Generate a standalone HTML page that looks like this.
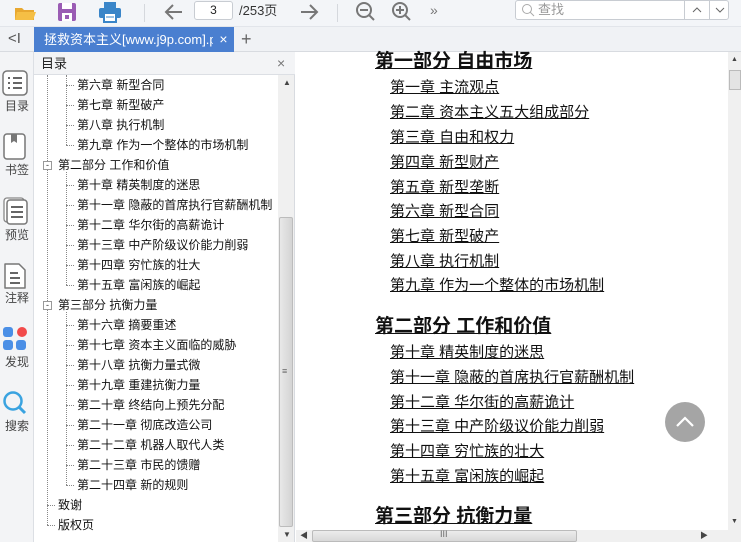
<!DOCTYPE html>
<html><head><meta charset="utf-8"><style>
*{margin:0;padding:0;box-sizing:border-box}
body{width:741px;height:542px;overflow:hidden;background:#fff;font-family:"Liberation Sans","Noto Sans CJK SC",sans-serif;position:relative;font-size:12px;color:#222}
.abs{position:absolute}
#tb{left:0;top:0;width:741px;height:27px;background:#f3f5f8;border-bottom:1px solid #e2e5ea}
#tabs{left:0;top:27px;width:741px;height:25px;background:#f0f2f5;border-bottom:1px solid #d8dbe0}
#tab{left:34px;top:27px;width:200px;height:25px;background:#4a7fd0;color:#fff;font-size:13px;line-height:25px;padding-left:10px;white-space:nowrap;overflow:hidden}
#side{left:0;top:52px;width:34px;height:490px;background:#f3f4f6;border-right:1px solid #dcdfe4}
.sl{position:absolute;left:0;width:34px;text-align:center;font-size:12px;color:#444}
#toc{left:34px;top:52px;width:261px;height:490px;background:#fff;border-right:1px solid #d8dbe0}
#toch{left:34px;top:52px;width:261px;height:23px;background:#f3f4f6;border-bottom:1px solid #dcdfe4;font-size:13px;line-height:23px;padding-left:7px}
.t{position:absolute;font-size:12px;line-height:16px;white-space:nowrap;color:#111}
.m{position:absolute;white-space:nowrap;text-decoration:underline;color:#111;font-size:15px;line-height:18px}
.h{font-size:19px;font-weight:bold;line-height:22px}
.dv{position:absolute;border-left:1px dotted #888}
.dh{position:absolute;border-top:1px dotted #888;width:8px}
</style></head><body>
<div id="tb" class="abs"></div>
<svg class="abs" style="left:13px;top:2px" width="24" height="20"><path d="M2 6h7l2 2h10v10H2z" fill="#e8a830"/><path d="M4 10h19l-3 8H2z" fill="#f5bf45"/></svg>
<svg class="abs" style="left:56px;top:1px" width="22" height="22"><rect x="2" y="2" width="18" height="18" rx="2" fill="#9a5cb4"/><rect x="6" y="2" width="10" height="6" fill="#fff"/><rect x="6" y="12" width="10" height="8" fill="#fff"/><rect x="9" y="14" width="4" height="4" fill="#9a5cb4"/></svg>
<svg class="abs" style="left:98px;top:1px" width="24" height="22"><rect x="6" y="1" width="12" height="6" fill="#3a85c8"/><rect x="1" y="7" width="22" height="10" rx="2" fill="#3a85c8"/><rect x="6" y="12" width="12" height="9" fill="#fff" stroke="#3a85c8" stroke-width="2"/><line x1="8" y1="16" x2="16" y2="16" stroke="#3a85c8"/></svg>
<div class="abs" style="left:144px;top:4px;width:1px;height:18px;background:#d5d8dd"></div>
<svg class="abs" style="left:163px;top:2px" width="22" height="20"><path d="M19 10H4M10 3 3 10l7 7" stroke="#777" stroke-width="2" fill="none"/></svg>
<div class="abs" style="left:194px;top:1px;width:39px;height:19px;border:1px solid #c8ccd2;border-radius:3px;background:#fff;text-align:center;font-size:12px;line-height:17px">3</div>
<div class="abs" style="left:239px;top:2px;font-size:13px;line-height:17px;color:#333">/253页</div>
<svg class="abs" style="left:298px;top:2px" width="22" height="20"><path d="M3 10h15M12 3l7 7-7 7" stroke="#777" stroke-width="2" fill="none"/></svg>
<div class="abs" style="left:337px;top:4px;width:1px;height:18px;background:#d5d8dd"></div>
<svg class="abs" style="left:355px;top:1px" width="22" height="22"><circle cx="9" cy="9" r="7" stroke="#777" stroke-width="2" fill="none"/><path d="M5 9h8M14 14l5 5" stroke="#777" stroke-width="2"/></svg>
<svg class="abs" style="left:391px;top:1px" width="22" height="22"><circle cx="9" cy="9" r="7" stroke="#777" stroke-width="2" fill="none"/><path d="M5 9h8M9 5v8M14 14l5 5" stroke="#777" stroke-width="2"/></svg>
<div class="abs" style="left:430px;top:2px;font-size:14px;color:#777">»</div>
<div class="abs" style="left:515px;top:0;width:214px;height:20px;border:1px solid #c8ccd2;border-radius:3px;background:#fff"></div>
<svg class="abs" style="left:521px;top:3px" width="14" height="14"><circle cx="6" cy="6" r="4.5" stroke="#aaa" fill="none"/><path d="M9 9l4 4" stroke="#aaa"/></svg>
<div class="abs" style="left:538px;top:1px;font-size:13px;line-height:17px;color:#999">查找</div>
<div class="abs" style="left:684px;top:0;width:1px;height:20px;background:#c8ccd2"></div>
<div class="abs" style="left:709px;top:0;width:1px;height:20px;background:#c8ccd2"></div>
<svg class="abs" style="left:691px;top:5px" width="12" height="10"><path d="M2 7l4-4 4 4" stroke="#666" fill="none"/></svg>
<svg class="abs" style="left:714px;top:5px" width="12" height="10"><path d="M2 3l4 4 4-4" stroke="#666" fill="none"/></svg>

<div id="tabs" class="abs"></div>
<div class="abs" style="left:8px;top:30px;font-size:15px;color:#555;line-height:18px">&lt;I</div>
<div id="tab" class="abs">拯救资本主义[www.j9p.com].p<span style="opacity:.6">d</span></div>
<div class="abs" style="left:213px;top:27px;width:21px;height:25px;background:#4a7fd0;color:#fff;font-size:14px;line-height:25px;text-align:center">×</div>
<div class="abs" style="left:241px;top:28px;font-size:18px;color:#666;line-height:22px">+</div>

<div id="side" class="abs"></div>
<svg class="abs" style="left:2px;top:70px" width="26" height="26"><rect x="1" y="1" width="24" height="24" rx="4" fill="#fff" stroke="#777" stroke-width="1.5"/><path d="M6 8h2M11 8h9M6 13h2M11 13h9M6 18h2M11 18h9" stroke="#666" stroke-width="2"/></svg>
<div class="sl" style="top:97px">目录</div>
<svg class="abs" style="left:3px;top:133px" width="24" height="28"><rect x="1" y="1" width="21" height="25" rx="3" fill="#fff" stroke="#777" stroke-width="1.5"/><path d="M8 1v9l3-2 3 2V1" fill="#777"/></svg>
<div class="sl" style="top:161px">书签</div>
<svg class="abs" style="left:3px;top:197px" width="26" height="28"><rect x="1" y="1" width="20" height="24" rx="3" fill="#fff" stroke="#888" stroke-width="1.3"/><rect x="4" y="3" width="20" height="24" rx="3" fill="#fff" stroke="#777" stroke-width="1.5"/><path d="M8 10h12M8 15h12M8 20h12" stroke="#666" stroke-width="2"/></svg>
<div class="sl" style="top:226px">预览</div>
<svg class="abs" style="left:3px;top:262px" width="24" height="28"><path d="M2 2h14l6 6v18H2z" fill="#fff" stroke="#777" stroke-width="1.5" stroke-linejoin="round"/><path d="M7 11h8M7 16h10M7 21h10" stroke="#666" stroke-width="2"/></svg>
<div class="sl" style="top:289px">注释</div>
<svg class="abs" style="left:2px;top:326px" width="26" height="26"><rect x="1" y="1" width="10" height="10" rx="3" fill="#4b8fe6"/><circle cx="20" cy="6" r="5" fill="#f24a4a"/><rect x="1" y="14" width="10" height="10" rx="3" fill="#4b8fe6"/><rect x="14" y="14" width="10" height="10" rx="3" fill="#4b8fe6"/></svg>
<div class="sl" style="top:353px">发现</div>
<svg class="abs" style="left:2px;top:390px" width="26" height="26"><circle cx="11" cy="11" r="8.5" stroke="#3aa3e0" stroke-width="2.5" fill="none"/><path d="M17 17l6 6" stroke="#3aa3e0" stroke-width="3"/></svg>
<div class="sl" style="top:417px">搜索</div>

<div id="toc" class="abs"></div>
<div id="toch" class="abs">目录</div>
<div class="abs" style="left:277px;top:55px;font-size:14px;color:#777;line-height:16px">×</div>
<div class="abs" style="left:278px;top:75px;width:16px;height:467px;background:#f0f0f0"></div>
<div class="abs" style="left:279px;top:217px;width:14px;height:310px;background:linear-gradient(90deg,#e8e8e8,#d4d4d4);border:1px solid #bcbcbc;border-radius:2px"></div>
<div class="abs" style="left:282px;top:367px;font-size:9px;color:#666;line-height:9px">≡</div>
<div class="abs" style="left:283px;top:78px;font-size:8px;color:#444">▲</div>
<div class="abs" style="left:283px;top:530px;font-size:8px;color:#444">▼</div>

<div class="dv" style="left:47px;top:75px;height:450px"></div>
<div class="dv" style="left:66px;top:75px;height:70px"></div>
<div class="dv" style="left:66px;top:172px;height:113px"></div>
<div class="dv" style="left:66px;top:312px;height:173px"></div>
<div class="dh" style="left:66px;top:85px"></div><div class="dh" style="left:66px;top:105px"></div><div class="dh" style="left:66px;top:125px"></div><div class="dh" style="left:66px;top:145px"></div>
<div class="dh" style="left:66px;top:185px"></div><div class="dh" style="left:66px;top:205px"></div><div class="dh" style="left:66px;top:225px"></div><div class="dh" style="left:66px;top:245px"></div><div class="dh" style="left:66px;top:265px"></div><div class="dh" style="left:66px;top:285px"></div>
<div class="dh" style="left:66px;top:325px"></div><div class="dh" style="left:66px;top:345px"></div><div class="dh" style="left:66px;top:365px"></div><div class="dh" style="left:66px;top:385px"></div><div class="dh" style="left:66px;top:405px"></div><div class="dh" style="left:66px;top:425px"></div><div class="dh" style="left:66px;top:445px"></div><div class="dh" style="left:66px;top:465px"></div><div class="dh" style="left:66px;top:485px"></div>
<div class="dh" style="left:47px;top:505px"></div><div class="dh" style="left:47px;top:525px"></div>
<div class="abs" style="left:43px;top:161px;width:9px;height:9px;border:1px solid #999;background:#fff;font-size:9px;line-height:6px;text-align:center;color:#333">-</div>
<div class="abs" style="left:43px;top:301px;width:9px;height:9px;border:1px solid #999;background:#fff;font-size:9px;line-height:6px;text-align:center;color:#333">-</div>

<div class="t" style="left:77px;top:77px">第六章 新型合同</div>
<div class="t" style="left:77px;top:97px">第七章 新型破产</div>
<div class="t" style="left:77px;top:117px">第八章 执行机制</div>
<div class="t" style="left:77px;top:137px">第九章 作为一个整体的市场机制</div>
<div class="t" style="left:58px;top:157px">第二部分 工作和价值</div>
<div class="t" style="left:77px;top:177px">第十章 精英制度的迷思</div>
<div class="t" style="left:77px;top:197px">第十一章 隐蔽的首席执行官薪酬机制</div>
<div class="t" style="left:77px;top:217px">第十二章 华尔街的高薪诡计</div>
<div class="t" style="left:77px;top:237px">第十三章 中产阶级议价能力削弱</div>
<div class="t" style="left:77px;top:257px">第十四章 穷忙族的壮大</div>
<div class="t" style="left:77px;top:277px">第十五章 富闲族的崛起</div>
<div class="t" style="left:58px;top:297px">第三部分 抗衡力量</div>
<div class="t" style="left:77px;top:317px">第十六章 摘要重述</div>
<div class="t" style="left:77px;top:337px">第十七章 资本主义面临的威胁</div>
<div class="t" style="left:77px;top:357px">第十八章 抗衡力量式微</div>
<div class="t" style="left:77px;top:377px">第十九章 重建抗衡力量</div>
<div class="t" style="left:77px;top:397px">第二十章 终结向上预先分配</div>
<div class="t" style="left:77px;top:417px">第二十一章 彻底改造公司</div>
<div class="t" style="left:77px;top:437px">第二十二章 机器人取代人类</div>
<div class="t" style="left:77px;top:457px">第二十三章 市民的馈赠</div>
<div class="t" style="left:77px;top:477px">第二十四章 新的规则</div>
<div class="t" style="left:58px;top:497px">致谢</div>
<div class="t" style="left:58px;top:517px">版权页</div>

<div class="m h" style="left:375px;top:51px">第一部分 自由市场</div>
<div class="m" style="left:390px;top:79px">第一章 主流观点</div>
<div class="m" style="left:390px;top:104px">第二章 资本主义五大组成部分</div>
<div class="m" style="left:390px;top:129px">第三章 自由和权力</div>
<div class="m" style="left:390px;top:154px">第四章 新型财产</div>
<div class="m" style="left:390px;top:179px">第五章 新型垄断</div>
<div class="m" style="left:390px;top:203px">第六章 新型合同</div>
<div class="m" style="left:390px;top:228px">第七章 新型破产</div>
<div class="m" style="left:390px;top:253px">第八章 执行机制</div>
<div class="m" style="left:390px;top:277px">第九章 作为一个整体的市场机制</div>
<div class="m h" style="left:375px;top:316px">第二部分 工作和价值</div>
<div class="m" style="left:390px;top:344px">第十章 精英制度的迷思</div>
<div class="m" style="left:390px;top:369px">第十一章 隐蔽的首席执行官薪酬机制</div>
<div class="m" style="left:390px;top:394px">第十二章 华尔街的高薪诡计</div>
<div class="m" style="left:390px;top:418px">第十三章 中产阶级议价能力削弱</div>
<div class="m" style="left:390px;top:443px">第十四章 穷忙族的壮大</div>
<div class="m" style="left:390px;top:468px">第十五章 富闲族的崛起</div>
<div class="m h" style="left:375px;top:506px">第三部分 抗衡力量</div>

<div class="abs" style="left:665px;top:402px;width:40px;height:40px;border-radius:50%;background:#a5a5a5"></div>
<svg class="abs" style="left:665px;top:402px" width="40" height="40"><path d="M12 24l8-8 8 8" stroke="#fff" stroke-width="2.2" fill="none"/></svg>

<div class="abs" style="left:728px;top:52px;width:13px;height:478px;background:#f0f0f0"></div>
<div class="abs" style="left:729px;top:70px;width:12px;height:20px;background:#e4e4e4;border:1px solid #bbb"></div>
<div class="abs" style="left:731px;top:56px;font-size:7px;color:#444">▲</div>
<div class="abs" style="left:731px;top:518px;font-size:7px;color:#444">▼</div>
<div class="abs" style="left:296px;top:530px;width:445px;height:12px;background:#f0f0f0"></div>
<div class="abs" style="left:312px;top:530px;width:265px;height:12px;background:linear-gradient(#ececec,#d8d8d8);border:1px solid #bbb;border-radius:2px"></div>
<div class="abs" style="left:440px;top:529px;font-size:9px;color:#666">III</div>
<div class="abs" style="left:300px;top:530px;font-size:8px;color:#444">◀</div>
<div class="abs" style="left:700px;top:530px;font-size:8px;color:#444">▶</div>
</body></html>
